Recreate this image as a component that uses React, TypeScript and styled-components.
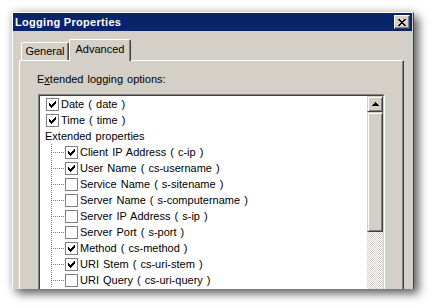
import React from 'react';
import styled, { createGlobalStyle } from 'styled-components';

const GlobalStyle = createGlobalStyle`
    html, body {
        margin: 0;
        padding: 0;
        background: #fff;
    }
    body {
        font-family: 'Liberation Sans', Arial, sans-serif;
        font-size: 11px;
        color: #000;
    }
`;

const face = '#d4d0c8';
const shadow = '#808080';
const darkShadow = '#404040';

const Page = styled.div`
    width: 432px;
    height: 308px;
    box-sizing: border-box;
    padding: 12px 0 0 12px;
    overflow: hidden;
`;

const Window = styled.div`
    width: 402px;
    height: 277px;
    box-sizing: border-box;
    display: flex;
    flex-direction: column;
    background: ${face};
    border-left: 1px solid #fff;
    border-top: 1px solid #fff;
    border-right: 1px solid ${darkShadow};
    padding-right: 1px;
    overflow: hidden;
    box-shadow: 0 0 9px rgba(0, 0, 0, 0.22), 5px 5px 9px rgba(0, 0, 0, 0.55);
`;

const TitleBar = styled.div`
    height: 18px;
    flex: none;
    display: flex;
    align-items: center;
    justify-content: space-between;
    padding: 0 2px;
    background: #0a246a;
`;

const Title = styled.span`
    color: #fff;
    font-weight: bold;
    font-size: 11px;
    letter-spacing: 0.3px;
`;

const CloseButton = styled.div`
    width: 16px;
    height: 14px;
    box-sizing: border-box;
    display: flex;
    align-items: center;
    justify-content: center;
    background: ${face};
    border-top: 1px solid #fff;
    border-left: 1px solid #fff;
    border-right: 1px solid ${darkShadow};
    border-bottom: 1px solid ${darkShadow};
    box-shadow: inset -1px -1px ${shadow};
`;

const Body = styled.div`
    flex: 1;
    display: flex;
    flex-direction: column;
    padding: 8px 8px 0 6px;
    min-height: 0;
`;

const Tabs = styled.div`
    height: 21px;
    flex: none;
    display: flex;
    align-items: flex-start;
    padding-left: 2px;
`;

const Tab = styled.div<{ $active?: boolean; $width: number }>`
    position: relative;
    z-index: ${(p) => (p.$active ? 1 : 0)};
    width: ${(p) => p.$width}px;
    height: ${(p) => (p.$active ? 22 : 18)}px;
    margin-top: ${(p) => (p.$active ? 0 : 3)}px;
    box-sizing: border-box;
    padding-top: ${(p) => (p.$active ? 2 : 1)}px;
    line-height: 14px;
    text-align: center;
    background: ${face};
    border-top: 1px solid #fff;
    border-left: 1px solid #fff;
    border-right: 1px solid ${darkShadow};
    border-top-left-radius: 2px;
    border-top-right-radius: 2px;
    box-shadow: inset -1px 0 ${shadow};
`;

const Panel = styled.div`
    flex: 1;
    min-height: 0;
    box-sizing: border-box;
    padding: 12px 0 0 17px;
    border-top: 1px solid #fff;
    border-left: 1px solid #fff;
    border-right: 1px solid ${darkShadow};
    box-shadow: inset -1px 0 ${shadow};
`;

const Label = styled.div`
    line-height: 13px;
    word-spacing: 1px;
`;

const ListFrame = styled.div`
    width: 347px;
    height: 220px;
    box-sizing: border-box;
    margin: 8px 0 0 1px;
    border-top: 1px solid ${shadow};
    border-left: 1px solid ${shadow};
    border-right: 1px solid #fff;
    border-bottom: 1px solid #fff;
`;

const ListInner = styled.div`
    height: 100%;
    box-sizing: border-box;
    display: flex;
    border-top: 1px solid ${darkShadow};
    border-left: 1px solid ${darkShadow};
    border-right: 1px solid ${face};
    border-bottom: 1px solid ${face};
`;

const Rows = styled.div`
    flex: 1;
    background: #fff;
`;

const Row = styled.div<{ $indent: number }>`
    height: 16px;
    display: flex;
    align-items: center;
    padding-left: ${(p) => p.$indent}px;
    white-space: pre;
    word-spacing: 1px;
    line-height: 16px;
`;

const Box = styled.span`
    width: 13px;
    height: 13px;
    flex: none;
    box-sizing: border-box;
    display: flex;
    align-items: center;
    justify-content: center;
    margin-right: 2px;
    background: #fff;
    border: 1px solid ${shadow};
`;

const Connector = styled.svg`
    width: 25px;
    height: 16px;
    flex: none;
    display: block;
`;

const ScrollBar = styled.div`
    width: 16px;
    flex: none;
    display: flex;
    flex-direction: column;
    background-color: #fff;
    background-image: conic-gradient(${face} 25%, #fff 0 50%, ${face} 0 75%, #fff 0);
    background-size: 2px 2px;
`;

const ScrollPart = styled.div<{ $height: number }>`
    height: ${(p) => p.$height}px;
    flex: none;
    box-sizing: border-box;
    display: flex;
    align-items: center;
    justify-content: center;
    background: ${face};
    border-top: 1px solid ${face};
    border-left: 1px solid ${face};
    border-right: 1px solid ${darkShadow};
    border-bottom: 1px solid ${darkShadow};
    box-shadow: inset 1px 1px #fff, inset -1px -1px ${shadow};
`;

type Item = { kind: 'option' | 'group' | 'child'; label: string; checked?: boolean };

const items: Item[] = [
    { kind: 'option', label: 'Date ( date )', checked: true },
    { kind: 'option', label: 'Time ( time )', checked: true },
    { kind: 'group', label: 'Extended properties' },
    { kind: 'child', label: 'Client IP Address ( c-ip )', checked: true },
    { kind: 'child', label: 'User Name ( cs-username )', checked: true },
    { kind: 'child', label: 'Service Name ( s-sitename )' },
    { kind: 'child', label: 'Server Name ( s-computername )' },
    { kind: 'child', label: 'Server IP Address ( s-ip )' },
    { kind: 'child', label: 'Server Port ( s-port )' },
    { kind: 'child', label: 'Method ( cs-method )', checked: true },
    { kind: 'child', label: 'URI Stem ( cs-uri-stem )', checked: true },
    { kind: 'child', label: 'URI Query ( cs-uri-query )' },
];

// classic 7x7 check glyph: top pixel of each 3px column
const checkColumns = [2, 3, 4, 3, 2, 1, 0];

const CheckMark = () => (
    <svg width="7" height="7" viewBox="0 0 7 7" shapeRendering="crispEdges">
        {checkColumns.map((top, x) => (
            <rect key={x} x={x} y={top} width="1" height="3" fill="#000" />
        ))}
    </svg>
);

const CloseGlyph = () => (
    <svg width="8" height="7" viewBox="0 0 8 7" shapeRendering="crispEdges">
        <path
            d="M0 0h2v1H0zM6 0h2v1H6zM1 1h2v1H1zM5 1h2v1H5zM2 2h4v1H2zM3 3h2v1H3zM2 4h4v1H2zM1 5h2v1H1zM5 5h2v1H5zM0 6h2v1H0zM6 6h2v1H6z"
            fill="#000"
        />
    </svg>
);

const UpArrow = () => (
    <svg width="7" height="4" viewBox="0 0 7 4" shapeRendering="crispEdges">
        <path d="M3 0h1v1H3zM2 1h3v1H2zM1 2h5v1H1zM0 3h7v1H0z" fill="#000" />
    </svg>
);

const CheckBox: React.FC<{ checked?: boolean }> = ({ checked }) => <Box>{checked && <CheckMark />}</Box>;

const TreeLine = () => (
    <Connector viewBox="0 0 25 16" shapeRendering="crispEdges">
        <line x1="11.5" y1="0" x2="11.5" y2="16" stroke={shadow} strokeDasharray="1 1" />
        <line x1="13" y1="8.5" x2="24" y2="8.5" stroke={shadow} strokeDasharray="1 1" />
    </Connector>
);

const ListRow: React.FC<{ item: Item }> = ({ item }) => {
    if (item.kind === 'group') {
        return <Row $indent={5}>{item.label}</Row>;
    }
    if (item.kind === 'child') {
        return (
            <Row $indent={0}>
                <TreeLine />
                <CheckBox checked={item.checked} />
                {item.label}
            </Row>
        );
    }
    return (
        <Row $indent={6}>
            <CheckBox checked={item.checked} />
            {item.label}
        </Row>
    );
};

export default function App() {
    return (
        <>
            <GlobalStyle />
            <Page>
                <Window>
                    <TitleBar>
                        <Title>Logging Properties</Title>
                        <CloseButton>
                            <CloseGlyph />
                        </CloseButton>
                    </TitleBar>
                    <Body>
                        <Tabs>
                            <Tab $width={48}>General</Tab>
                            <Tab $width={62} $active>
                                Advanced
                            </Tab>
                        </Tabs>
                        <Panel>
                            <Label>
                                E<u>x</u>tended logging options:
                            </Label>
                            <ListFrame>
                                <ListInner>
                                    <Rows>
                                        {items.map((item) => (
                                            <ListRow key={item.label} item={item} />
                                        ))}
                                    </Rows>
                                    <ScrollBar>
                                        <ScrollPart $height={16}>
                                            <UpArrow />
                                        </ScrollPart>
                                        <ScrollPart $height={120} />
                                    </ScrollBar>
                                </ListInner>
                            </ListFrame>
                        </Panel>
                    </Body>
                </Window>
            </Page>
        </>
    );
}
